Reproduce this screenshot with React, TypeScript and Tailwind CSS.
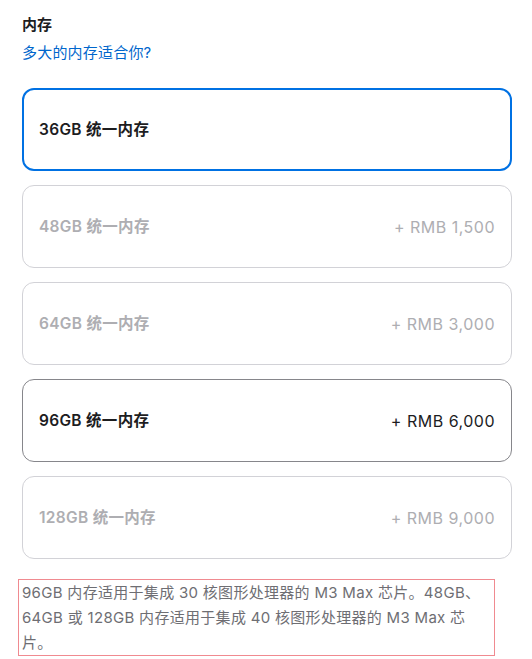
import React from "react";

type Option = {
  size: string;
  price?: string;
  state: "selected" | "available" | "disabled";
};

const options: Option[] = [
  { size: "36GB", state: "selected" },
  { size: "48GB", price: "+ RMB 1,500", state: "disabled" },
  { size: "64GB", price: "+ RMB 3,000", state: "disabled" },
  { size: "96GB", price: "+ RMB 6,000", state: "available" },
  { size: "128GB", price: "+ RMB 9,000", state: "disabled" },
];

function MemoryOption({ opt }: { opt: Option }) {
  const border =
    opt.state === "selected"
      ? "border-2 border-[#0071e3] px-[15px]"
      : opt.state === "available"
      ? "border border-[#86868b] px-4"
      : "border border-[#d2d2d7] px-4";
  const text = opt.state === "disabled" ? "text-[#aeaeb2]" : "text-[#1d1d1f]";

  return (
    <div
      className={`flex h-[83px] items-center justify-between rounded-[12px] bg-white ${border} ${text}`}
    >
      <span className="text-[15.5px] font-semibold tracking-[0.3px]">{opt.size} 统一内存</span>
      {opt.price && <span className="text-[16px] font-normal tracking-[0.5px]">{opt.price}</span>}
    </div>
  );
}

export default function App() {
  return (
    <div
      className="min-h-[659px] w-[532px] bg-white pl-[22px] pr-[20px] pt-[15px]"
      style={{ fontFamily: '"Inter", "Noto Sans CJK SC", sans-serif' }}
    >
      <h2 className="text-[15px] font-semibold leading-[20px] text-[#1d1d1f]">内存</h2>
      <a className="mt-[8px] block text-[15px] leading-[20px] tracking-[0.2px] text-[#0066cc]">多大的内存适合你?</a>

      <div className="mt-[25px] flex flex-col gap-[14px]">
        {options.map((o) => (
          <MemoryOption key={o.size} opt={o} />
        ))}
      </div>

      <p className="-ml-[4px] mt-[20px] w-[477px] border border-[#f08a90] pl-[3px] pr-[6px] text-[15px] leading-[25px] tracking-[0.3px] text-[#6e6e73]">
        96GB 内存适用于集成 30 核图形处理器的 M3 Max 芯片。48GB、64GB 或 128GB 内存适用于集成 40 核图形处理器的 M3 Max 芯片。
      </p>
    </div>
  );
}
